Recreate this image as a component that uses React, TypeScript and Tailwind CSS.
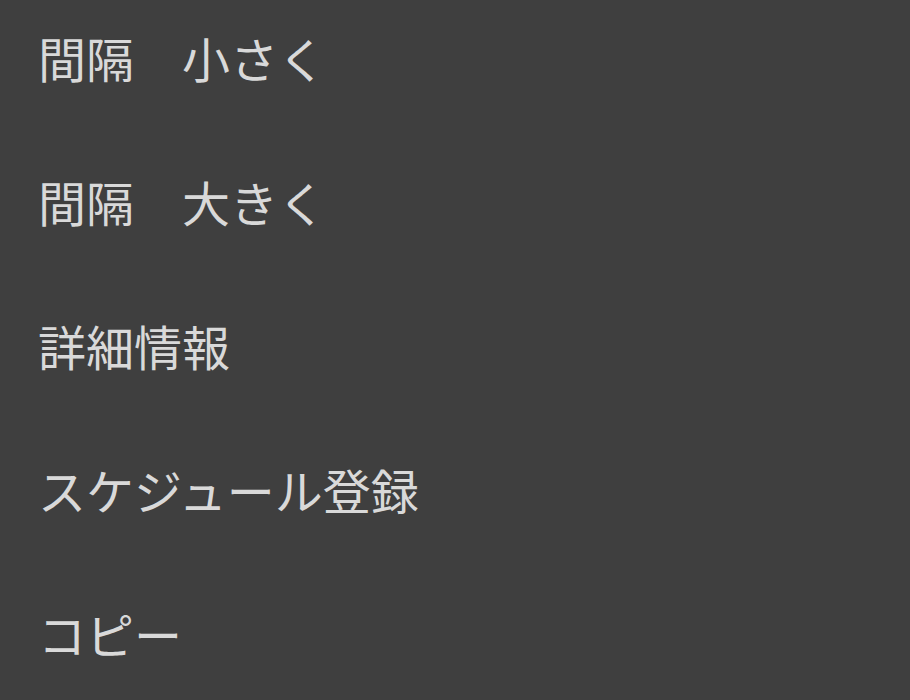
const items = ["間隔　小さく", "間隔　大きく", "詳細情報", "スケジュール登録", "コピー"]

export default function App() {
  return (
    <div
      className="w-[910px] h-[700px] overflow-hidden bg-[#3f3f3f] text-[#d9d9d9]"
      style={{ fontFamily: '"Noto Sans CJK JP", "Noto Sans", sans-serif' }}
    >
      <ul className="flex flex-col gap-[96px] pt-[33px] pl-[38px]">
        {items.map((label) => (
          <li key={label} className="text-[48px] leading-[48px] whitespace-pre">
            {label}
          </li>
        ))}
      </ul>
    </div>
  )
}
